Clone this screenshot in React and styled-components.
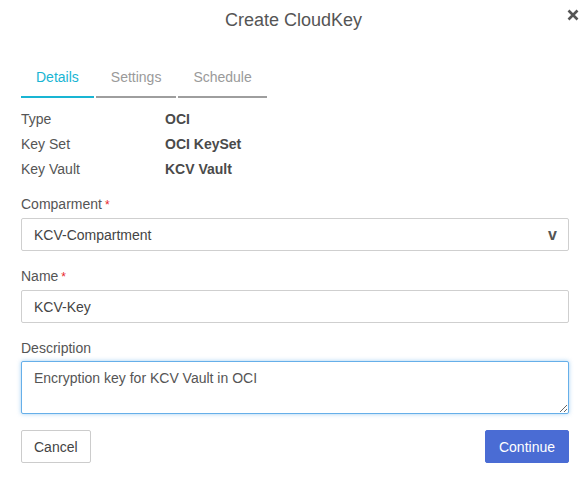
import React, { useState } from 'react';
import styled, { createGlobalStyle } from 'styled-components';

const GlobalStyle = createGlobalStyle`
  html, body {
    margin: 0;
    background: #fff;
    font-family: "Liberation Sans", Arial, sans-serif;
  }
`;

const Dialog = styled.div`
  width: 587px;
  height: 485px;
  box-sizing: border-box;
  padding: 0 18px 0 21px;
  background: #fff;
  color: #555;
  font-size: 14px;
`;

const Header = styled.div`
  position: relative;
  height: 40px;
  line-height: 40px;
  text-align: center;
  margin: 0 -18px 0 -21px;
`;

const Title = styled.h1`
  margin: 0;
  font-size: 18px;
  font-weight: normal;
  color: #555;
`;

const Close = styled.button`
  position: absolute;
  top: 9px;
  right: 8px;
  width: 12px;
  height: 12px;
  padding: 0;
  border: 0;
  background: none;
  cursor: pointer;
  display: flex;
`;

const Tabs = styled.div`
  display: flex;
  gap: 2px;
  margin-top: 21px;
`;

const Tab = styled.div`
  padding: 6px 15px 9px;
  line-height: 20px;
  color: ${p => (p.$active ? '#19b5d3' : '#9a9a9a')};
  border-bottom: 2px solid ${p => (p.$active ? '#19b5d3' : '#9e9e9e')};
  cursor: pointer;
`;

const Info = styled.div`
  margin-top: 8px;
  display: grid;
  grid-template-columns: 144px 1fr;
  grid-auto-rows: 25px;
  align-items: center;
`;

const InfoLabel = styled.div`
  color: #555;
`;

const InfoValue = styled.div`
  font-weight: bold;
  color: #4a4a4a;
`;

const Field = styled.div`
  margin-top: ${p => p.$top}px;
`;

const Label = styled.label`
  display: block;
  line-height: 20px;
  margin-bottom: 3px;
  color: #555;
`;

const Star = styled.span`
  color: #e8262b;
  margin-left: 3px;
  font-size: 12px;
`;

const Box = styled.div`
  box-sizing: border-box;
  height: 33px;
  border: 1px solid #cfcfcf;
  border-radius: 2px;
  padding: 0 12px;
  display: flex;
  align-items: center;
  justify-content: space-between;
  color: #444;
`;

const Chevron = styled.span`
  font-weight: bold;
  font-size: 16px;
  color: #555;
  margin-right: -1px;
`;

const Area = styled.textarea`
  display: block;
  box-sizing: border-box;
  width: 100%;
  height: 53px;
  margin: 0;
  padding: 7px 12px;
  border: 1px solid #66afe9;
  border-radius: 2px;
  box-shadow: 0 0 4px rgba(102, 175, 233, 0.6);
  font-family: inherit;
  font-size: 14px;
  line-height: 18px;
  color: #555;
  outline: none;
  resize: vertical;
`;

const Footer = styled.div`
  display: flex;
  justify-content: space-between;
  margin-top: 16px;
`;

const Button = styled.button`
  height: 33px;
  padding: 0 ${p => (p.$primary ? 13 : 12)}px;
  border: 1px solid ${p => (p.$primary ? '#4a6cd4' : '#cccccc')};
  border-radius: 2px;
  background: ${p => (p.$primary ? '#4a6cd4' : '#fff')};
  color: ${p => (p.$primary ? '#fff' : '#444')};
  font-family: inherit;
  font-size: 14px;
  cursor: pointer;
`;

const tabs = ['Details', 'Settings', 'Schedule'];

const info = [
  ['Type', 'OCI'],
  ['Key Set', 'OCI KeySet'],
  ['Key Vault', 'KCV Vault'],
];

export default function App() {
  const [active, setActive] = useState('Details');
  const [desc, setDesc] = useState('Encryption key for KCV Vault in OCI');

  return (
    <Dialog>
      <GlobalStyle />
      <Header>
        <Title>Create CloudKey</Title>
        <Close aria-label="close">
          <svg width="12" height="12" viewBox="0 0 12 12">
            <path d="M1.5 1.5 L10.5 10.5 M10.5 1.5 L1.5 10.5" stroke="#555" strokeWidth="2.6" />
          </svg>
        </Close>
      </Header>

      <Tabs>
        {tabs.map(t => (
          <Tab key={t} $active={t === active} onClick={() => setActive(t)}>{t}</Tab>
        ))}
      </Tabs>

      <Info>
        {info.map(([k, v]) => (
          <React.Fragment key={k}>
            <InfoLabel>{k}</InfoLabel>
            <InfoValue>{v}</InfoValue>
          </React.Fragment>
        ))}
      </Info>

      <Field $top={13}>
        <Label>Comparment<Star>*</Star></Label>
        <Box>
          <span>KCV-Compartment</span>
          <Chevron>v</Chevron>
        </Box>
      </Field>

      <Field $top={15}>
        <Label>Name<Star>*</Star></Label>
        <Box>KCV-Key</Box>
      </Field>

      <Field $top={15}>
        <Label>Description</Label>
        <Area value={desc} onChange={e => setDesc(e.target.value)} />
      </Field>

      <Footer>
        <Button>Cancel</Button>
        <Button $primary>Continue</Button>
      </Footer>
    </Dialog>
  );
}
